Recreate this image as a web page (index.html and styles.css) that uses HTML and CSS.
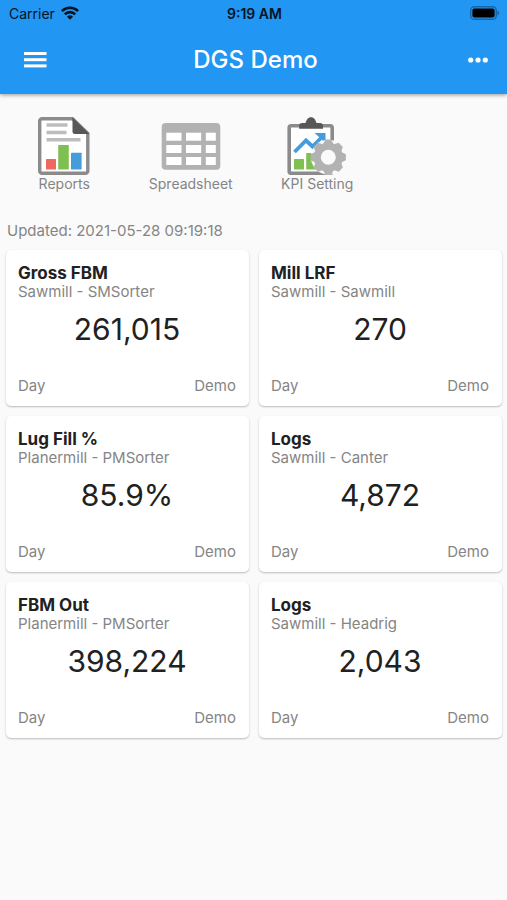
FILE: index.html
```
<!doctype html>
<html lang="en">

<head>
  <meta charset="UTF-8" />
  <meta name="viewport" content="width=device-width, initial-scale=1.0" />
  <title>DGS Demo</title>
  <link rel="stylesheet" href="styles.css">
</head>

<body>
  <header class="header">
    <div class="status">
      <div class="status-carrier">
        <span>Carrier</span>
        <svg width="18" height="14" viewBox="0 0 18 14" fill="none" stroke="#06131f" stroke-width="2.6">
          <path d="M0.9 5.1a11.5 11.5 0 0 1 16.2 0" />
          <path d="M3.8 8.3a7.4 7.4 0 0 1 10.4 0" />
          <path d="M9 13.8L6 10.8a4.3 4.3 0 0 1 6 0z" fill="#06131f" stroke="none" />
        </svg>
      </div>
      <div class="status-time">9:19 AM</div>
      <div class="status-battery">
        <svg width="30" height="14" viewBox="0 0 30 14">
          <rect x="0.7" y="0.7" width="25.6" height="12.6" rx="3.6" fill="none" stroke="#1766a8" stroke-width="1.4" />
          <rect x="2.4" y="2.4" width="22.2" height="9.2" rx="2" fill="#000" />
          <path d="M27.4 4.6c2.4 0.9 2.4 3.9 0 4.8z" fill="#1766a8" />
        </svg>
      </div>
    </div>

    <div class="nav">
      <button class="btn" type="button" aria-label="Open menu">
        <svg width="24" height="16" viewBox="0 0 24 16" fill="#fff">
          <rect x="1" y="0" width="22.5" height="3" />
          <rect x="1" y="6.2" width="22.5" height="3" />
          <rect x="1" y="12.4" width="22.5" height="3" />
        </svg>
      </button>
      <h1 class="title">DGS Demo</h1>
      <button class="btn btn-more" type="button" aria-label="More">
        <svg width="20" height="6" viewBox="0 0 20 6" fill="#fff">
          <circle cx="2.7" cy="3" r="2.6" />
          <circle cx="10" cy="3" r="2.6" />
          <circle cx="17.3" cy="3" r="2.6" />
        </svg>
      </button>
    </div>
  </header>

  <main>
    <nav class="shortcuts">
      <a class="shortcut" href="#reports">
        <svg width="52" height="58" viewBox="0 0 52 58">
          <path d="M4 1.7H34.5L49.8 16.5V54a2.3 2.3 0 0 1-2.3 2.3H4A2.3 2.3 0 0 1 1.7 54V4A2.3 2.3 0 0 1 4 1.7z" fill="#fff" stroke="#8b8b8b" stroke-width="3.4" />
          <path d="M34.5 0.3L51.4 17H37a2.5 2.5 0 0 1-2.5-2.5z" fill="#575757" />
          <path d="M8.5 8H29.5M8.5 15.5H28.5M8.5 22.8H42.5" stroke="#bdbdbd" stroke-width="3.6" />
          <rect x="8" y="42" width="10" height="10.5" rx="0.6" fill="#ec6a5e" />
          <rect x="20.2" y="28" width="10.6" height="24.5" rx="0.6" fill="#7fc053" />
          <rect x="33" y="35.7" width="10.6" height="16.8" rx="0.6" fill="#459cdb" />
        </svg>
        <span>Reports</span>
      </a>

      <a class="shortcut" href="#spreadsheet">
        <svg width="60" height="58" viewBox="0 0 60 58">
          <rect x="0.7" y="6" width="58.6" height="46.7" rx="4" fill="#b2b2b2" />
          <g fill="#fff">
            <rect x="5.3" y="15.7" width="15.2" height="8" />
            <rect x="25" y="15.7" width="15.2" height="8" />
            <rect x="44.8" y="15.7" width="10" height="8" />
            <rect x="5.3" y="28" width="15.2" height="8" />
            <rect x="25" y="28" width="15.2" height="8" />
            <rect x="44.8" y="28" width="10" height="8" />
            <rect x="5.3" y="40" width="15.2" height="8" />
            <rect x="25" y="40" width="15.2" height="8" />
            <rect x="44.8" y="40" width="10" height="8" />
          </g>
        </svg>
        <span>Spreadsheet</span>
      </a>

      <a class="shortcut" href="#kpi">
        <svg width="60" height="58" viewBox="0 0 60 58">
          <rect x="2.2" y="8.8" width="43" height="47.5" rx="2" fill="#fff" stroke="#8b8b8b" stroke-width="3.6" />
          <path d="M12.2 11.7V9a3 3 0 0 1 3-3H18.5C19.6 2.6 21 0.3 24 0.3S28.4 2.6 29.5 6H33a3 3 0 0 1 3 3v2.7z" fill="#575757" />
          <rect x="7" y="42" width="10" height="10.5" rx="0.6" fill="#7fc053" />
          <rect x="19.2" y="36" width="10" height="16.5" rx="0.6" fill="#7fc053" />
          <path d="M7.5 35L19 23.5L25.5 29.5L36 19" fill="none" stroke="#459cdb" stroke-width="3.8" />
          <path d="M27.5 16H38.5V26.5L35 23L31.5 19.5z" fill="#459cdb" />
          <!-- gear: light outline, teeth, ring -->
          <circle cx="41.3" cy="40.2" r="17.4" fill="#fafafa" />
          <g transform="translate(41.3 40.2)">
            <circle r="11" fill="none" stroke="#b2b2b2" stroke-width="7" />
            <g fill="#b2b2b2">
              <path id="tooth" d="M-5.2 -13L-3 -17.6H3L5.2 -13z" />
              <use href="#tooth" transform="rotate(45)" />
              <use href="#tooth" transform="rotate(90)" />
              <use href="#tooth" transform="rotate(135)" />
              <use href="#tooth" transform="rotate(180)" />
              <use href="#tooth" transform="rotate(225)" />
              <use href="#tooth" transform="rotate(270)" />
              <use href="#tooth" transform="rotate(315)" />
            </g>
          </g>
        </svg>
        <span>KPI Setting</span>
      </a>
    </nav>

    <p class="updated">Updated: 2021-05-28 09:19:18</p>

    <div class="cards">
      <section class="card">
        <h2 class="card-name">Gross FBM</h2>
        <p class="card-source">Sawmill - SMSorter</p>
        <p class="card-value">261,015</p>
        <div class="card-foot"><span>Day</span><span>Demo</span></div>
      </section>

      <section class="card">
        <h2 class="card-name">Mill LRF</h2>
        <p class="card-source">Sawmill - Sawmill</p>
        <p class="card-value">270</p>
        <div class="card-foot"><span>Day</span><span>Demo</span></div>
      </section>

      <section class="card">
        <h2 class="card-name">Lug Fill %</h2>
        <p class="card-source">Planermill - PMSorter</p>
        <p class="card-value">85.9%</p>
        <div class="card-foot"><span>Day</span><span>Demo</span></div>
      </section>

      <section class="card">
        <h2 class="card-name">Logs</h2>
        <p class="card-source">Sawmill - Canter</p>
        <p class="card-value">4,872</p>
        <div class="card-foot"><span>Day</span><span>Demo</span></div>
      </section>

      <section class="card">
        <h2 class="card-name">FBM Out</h2>
        <p class="card-source">Planermill - PMSorter</p>
        <p class="card-value">398,224</p>
        <div class="card-foot"><span>Day</span><span>Demo</span></div>
      </section>

      <section class="card">
        <h2 class="card-name">Logs</h2>
        <p class="card-source">Sawmill - Headrig</p>
        <p class="card-value">2,043</p>
        <div class="card-foot"><span>Day</span><span>Demo</span></div>
      </section>
    </div>
  </main>
</body>

</html>
```
FILE: styles.css
```
* {
  box-sizing: border-box;
}

body {
  margin: 0;
  min-height: 100vh;
  background-color: #FAFAFA;
  color: #212121;
  font-family: Inter, Roboto, sans-serif;
  font-size: 15px;
}

h1,
h2,
p {
  margin: 0;
}

svg {
  display: block;
}

.header {
  background-color: #2196F3;
  box-shadow: 0 1px 4px rgba(0, 0, 0, 0.4);
}

.status {
  display: grid;
  grid-template-columns: 1fr auto 1fr;
  align-items: center;
  height: 26px;
  padding: 0 7px 0 9px;
  color: #06131F;
  font-size: 14px;
}

.status-carrier {
  display: flex;
  align-items: center;
  gap: 6px;
}

.status-time {
  font-weight: 600;
}

.status-battery {
  justify-self: end;
}

.nav {
  display: grid;
  grid-template-columns: 1fr auto 1fr;
  align-items: center;
  height: 68px;
  padding: 0 11px 0 15px;
}

.btn {
  justify-self: start;
  padding: 8px;
  border: 0;
  background: none;
  cursor: pointer;
}

.btn-more {
  justify-self: end;
}

.title {
  color: #FFFFFF;
  font-size: 24px;
  font-weight: 500;
  line-height: 30px;
}

.shortcuts {
  display: grid;
  grid-template-columns: repeat(4, 1fr);
  padding: 23px 0 0 1px;
}

.shortcut {
  display: flex;
  flex-direction: column;
  align-items: center;
  color: #858585;
  font-size: 14px;
  line-height: 18px;
  text-decoration: none;
}

.updated {
  padding: 28px 7px 9px;
  color: #858585;
  line-height: 20px;
}

.cards {
  display: grid;
  grid-template-columns: 1fr 1fr;
  gap: 10px;
  padding: 0 5px 10px 6px;
}

.card {
  padding: 13px 13px 10px 12px;
  border-radius: 5px;
  background-color: #FFFFFF;
  box-shadow: 0 1px 2px rgba(0, 0, 0, 0.26);
}

.card-name {
  font-size: 17px;
  font-weight: 700;
  line-height: 20px;
}

.card-source {
  color: #858585;
  line-height: 18px;
}

.card-value {
  padding: 10px 0 28px;
  font-size: 30px;
  line-height: 37px;
  text-align: center;
}

.card-foot {
  display: flex;
  justify-content: space-between;
  color: #858585;
  line-height: 20px;
}
```
